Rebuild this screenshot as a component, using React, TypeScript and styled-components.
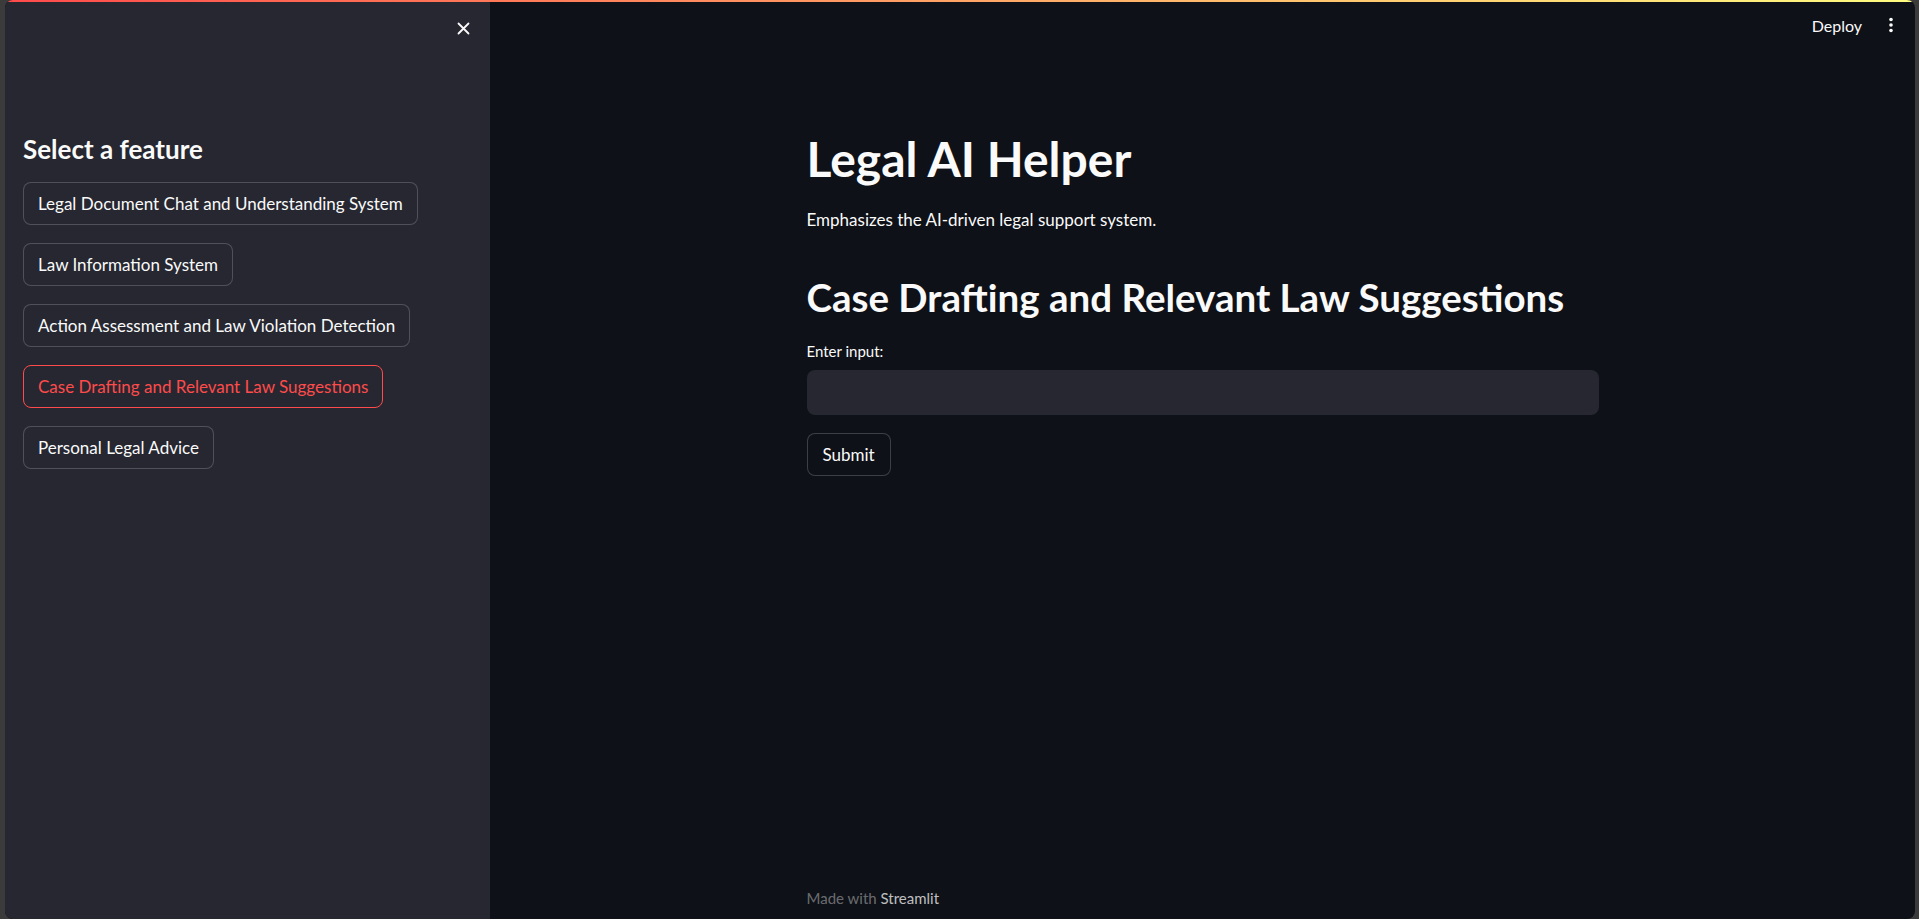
import { FunctionComponent } from "react";
import styled, { createGlobalStyle } from "styled-components";

const GlobalStyle = createGlobalStyle`
  html, body {
    margin: 0;
    padding: 0;
    background: #3b3b3b;
  }
  body {
    font-family: Lato, "Noto Sans", sans-serif;
    color: #fafafa;
  }
  * {
    box-sizing: border-box;
  }
`;

const Frame = styled.div`
  width: 1919px;
  height: 919px;
  display: flex;
  padding: 0 4px 0 5px;
  background: #3b3b3b;
`;

const Window = styled.div`
  flex: 1;
  display: flex;
  position: relative;
  border-radius: 8px;
  overflow: hidden;
  background: #0e1117;
`;

const Decoration = styled.div`
  position: absolute;
  top: 0;
  left: 0;
  right: 0;
  height: 2px;
  background: linear-gradient(90deg, #ff4b4b, #fffd80);
  z-index: 2;
`;

const Sidebar = styled.aside`
  width: 485px;
  flex-shrink: 0;
  display: flex;
  flex-direction: column;
  padding: 0 20px 0 18px;
  background: #262730;
`;

const SidebarTop = styled.div`
  height: 56px;
  display: flex;
  align-items: center;
  justify-content: flex-end;
`;

const CloseButton = styled.button`
  width: 13px;
  height: 13px;
  padding: 0;
  border: none;
  background: none;
  display: flex;
  color: #fafafa;
`;

const SidebarHeading = styled.h2`
  margin: 77px 0 0;
  font-size: 26px;
  line-height: 32px;
  font-weight: 700;
`;

const FeatureList = styled.div`
  margin-top: 17px;
  display: flex;
  flex-direction: column;
  align-items: flex-start;
  gap: 18px;
`;

const FeatureButton = styled.button<{ $active?: boolean }>`
  height: 43px;
  padding: 0 14px;
  border-radius: 8px;
  border: 1px solid ${(p) => (p.$active ? "#ff4b4b" : "rgba(250, 250, 250, 0.2)")};
  background: #262730;
  color: ${(p) => (p.$active ? "#ff4b4b" : "#fafafa")};
  font-family: Lato, "Noto Sans", sans-serif;
  font-size: 17px;
  white-space: nowrap;
`;

const Main = styled.main`
  flex: 1;
  display: flex;
  flex-direction: column;
  align-items: center;
`;

const Header = styled.header`
  align-self: stretch;
  height: 56px;
  display: flex;
  align-items: center;
  justify-content: flex-end;
  gap: 27px;
  padding: 0 22px 6px 0;
`;

const DeployLink = styled.span`
  font-size: 16px;
  color: #fafafa;
`;

const Content = styled.section`
  width: 792px;
  padding-top: 75px;
  display: flex;
  flex-direction: column;
  align-items: flex-start;
`;

const Title = styled.h1`
  margin: 0;
  font-size: 48px;
  line-height: 56px;
  font-weight: 700;
`;

const Lead = styled.p`
  margin: 20px 0 0;
  font-size: 17px;
  line-height: 26px;
`;

const SectionTitle = styled.h2`
  margin: 41px 0 0;
  font-size: 38.5px;
  line-height: 46px;
  font-weight: 700;
`;

const FieldLabel = styled.label`
  margin-top: 21px;
  font-size: 15px;
  line-height: 20px;
`;

const TextInput = styled.input`
  margin-top: 9px;
  width: 100%;
  height: 45px;
  border: none;
  border-radius: 8px;
  background: #262730;
  outline: none;
  padding: 0 14px;
  color: #fafafa;
  font-family: inherit;
  font-size: 17px;
`;

const SubmitButton = styled.button`
  margin-top: 18px;
  height: 43px;
  padding: 0 15px;
  border-radius: 8px;
  border: 1px solid rgba(250, 250, 250, 0.2);
  background: #0e1117;
  color: #fafafa;
  font-family: inherit;
  font-size: 17px;
`;

const Footer = styled.footer`
  margin-top: auto;
  width: 792px;
  padding-bottom: 10px;
  font-size: 15px;
  line-height: 22px;
  color: rgba(250, 250, 250, 0.4);
`;

const FooterBrand = styled.span`
  color: rgba(250, 250, 250, 0.75);
`;

const features = [
  "Legal Document Chat and Understanding System",
  "Law Information System",
  "Action Assessment and Law Violation Detection",
  "Case Drafting and Relevant Law Suggestions",
  "Personal Legal Advice",
];

const App: FunctionComponent = () => {
  return (
    <Frame>
      <GlobalStyle />
      <Window>
        <Decoration />
        <Sidebar>
          <SidebarTop>
            <CloseButton aria-label="Close sidebar">
              <svg width="13" height="13" viewBox="0 0 13 13">
                <path d="M1.5 1.5 L11.5 11.5 M11.5 1.5 L1.5 11.5" stroke="currentColor" strokeWidth="1.8" strokeLinecap="round" />
              </svg>
            </CloseButton>
          </SidebarTop>
          <SidebarHeading>Select a feature</SidebarHeading>
          <FeatureList>
            {features.map((f) => (
              <FeatureButton key={f} $active={f === "Case Drafting and Relevant Law Suggestions"}>
                {f}
              </FeatureButton>
            ))}
          </FeatureList>
        </Sidebar>
        <Main>
          <Header>
            <DeployLink>Deploy</DeployLink>
            <svg width="4" height="16" viewBox="0 0 4 16">
              <circle cx="2" cy="2.5" r="1.8" fill="#fafafa" />
              <circle cx="2" cy="8" r="1.8" fill="#fafafa" />
              <circle cx="2" cy="13.5" r="1.8" fill="#fafafa" />
            </svg>
          </Header>
          <Content>
            <Title>Legal AI Helper</Title>
            <Lead>Emphasizes the AI-driven legal support system.</Lead>
            <SectionTitle>Case Drafting and Relevant Law Suggestions</SectionTitle>
            <FieldLabel>Enter input:</FieldLabel>
            <TextInput />
            <SubmitButton>Submit</SubmitButton>
          </Content>
          <Footer>
            Made with <FooterBrand>Streamlit</FooterBrand>
          </Footer>
        </Main>
      </Window>
    </Frame>
  );
};

export default App;
